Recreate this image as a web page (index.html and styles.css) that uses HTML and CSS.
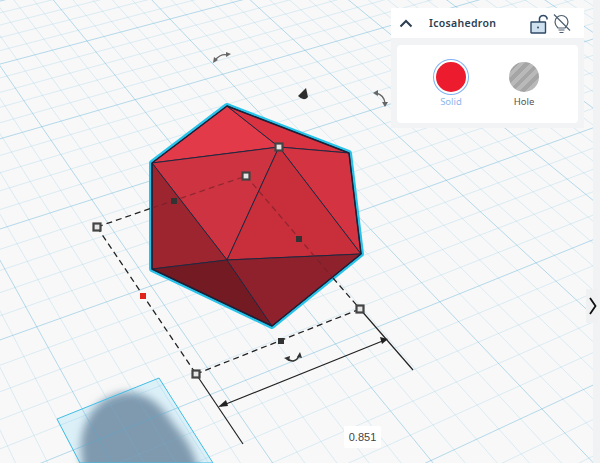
FILE: index.html
```html
<!DOCTYPE html>
<html lang="en">
<head>
    <meta charset="UTF-8">
    <title>Icosahedron</title>
    <link rel="stylesheet" href="styles.css">
</head>
<body>

<div class="editor">
    <div class="stage">
        <svg class="scene" width="593" height="463" viewBox="0 0 593 463">
            <defs>
                <filter id="soft" x="-30%" y="-30%" width="160%" height="160%"><feGaussianBlur stdDeviation="4"/></filter>
            </defs>

            <!-- shadow sits under the grid -->
            <polygon class="plate-fill" points="57,419 159,378 213,463 80,463"/>
            <path class="shadow" filter="url(#soft)" d="M81 445 C83 416 100 396 124 393 C146 391 160 404 172 422 C184 438 198 450 202 490 L84 490 Z"/>
            <g id="grid"></g>
            <polygon class="plate-line" points="213,463 159,378 57,419 80,463"/>

            <!-- extension and size lines -->
            <line class="solid-line" x1="196" y1="374" x2="243" y2="444"/>
            <line class="solid-line" x1="360" y1="309" x2="413" y2="370"/>
            <line class="solid-line" x1="221" y1="406" x2="385" y2="340"/>
            <polygon class="head" points="218,407 226,400 228,406"/>
            <polygon class="head" points="388,339 380,337 382,344"/>

            <!-- icosahedron -->
            <polygon class="halo" points="227,106 349,153 361,254 272,326 152,269 152,163"/>
            <polygon class="face f1" points="227,106 279,147 152,163"/>
            <polygon class="face f2" points="227,106 349,153 279,147"/>
            <polygon class="face f3" points="152,163 279,147 227,260"/>
            <polygon class="face f4" points="279,147 349,153 361,254"/>
            <polygon class="face f5" points="279,147 361,254 227,260"/>
            <polygon class="face f6" points="152,163 227,260 152,269"/>
            <polygon class="face f7" points="152,269 227,260 272,326"/>
            <polygon class="face f8" points="227,260 361,254 272,326"/>
            <polygon class="rim" points="227,106 349,153 361,254 272,326 152,269 152,163"/>

            <!-- bounding box -->
            <line class="dash" x1="97" y1="227" x2="152" y2="208"/>
            <line class="dash faint" x1="152" y1="208" x2="246" y2="176"/>
            <line class="dash faint" x1="246" y1="176" x2="333" y2="278"/>
            <line class="dash" x1="333" y1="278" x2="360" y2="309"/>
            <line class="dash" x1="97" y1="227" x2="196" y2="374"/>
            <line class="dash" x1="196" y1="374" x2="360" y2="309"/>

            <rect class="mid" x="171" y="198" width="6" height="6"/>
            <rect class="mid" x="296" y="236" width="6" height="6"/>
            <rect class="mid" x="278" y="338" width="6" height="6"/>
            <rect class="mid red" x="140" y="293" width="6" height="6"/>

            <rect class="handle" x="93.500" y="223.500" width="7" height="7"/>
            <rect class="handle" x="192.500" y="370.500" width="7" height="7"/>
            <rect class="handle" x="356.500" y="305.500" width="7" height="7"/>
            <rect class="handle" x="242.500" y="172.500" width="7" height="7"/>
            <rect class="handle" x="275.500" y="143.500" width="7" height="7"/>

            <!-- cone handle and rotate arrows -->
            <path class="cone" d="M306 88 L308 97 Q304 102 298 96 Z"/>
            <path class="turn" d="M215 60 Q221 53 228 55"/>
            <polygon class="turn-head" points="213,63 214,57 218,60"/>
            <polygon class="turn-head" points="231,54 226,52 226,57"/>
            <path class="turn" d="M376 93 Q384 95 385 103"/>
            <polygon class="turn-head" points="373,93 378,90 378,96"/>
            <polygon class="turn-head" points="385,107 382,102 388,102"/>
            <path class="turn dark" d="M287 359 Q295 364 299 356"/>
            <polygon class="turn-head dark" points="284,358 290,356 289,361"/>
            <polygon class="turn-head dark" points="300,352 297,357 302,358"/>
        </svg>

        <div class="size-label">0.851</div>

        <div class="panel">
            <div class="panel-head">
                <svg class="chevron" width="14" height="9" viewBox="0 0 14 9"><path d="M1.500 7.500 L7 2 L12.500 7.500"/></svg>
                <span class="panel-title">Icosahedron</span>
                <svg class="lock" width="18" height="21" viewBox="0 0 18 21">
                    <rect x="1" y="9" width="14.500" height="11" rx="0.500"/>
                    <circle cx="8" cy="14.500" r="1"/>
                    <path d="M9.500 9 V5 a4 4 0 0 1 7.500 0 v1.500"/>
                </svg>
                <svg class="bulb" width="18" height="21" viewBox="0 0 18 21">
                    <path d="M5 15 C3 13 2 11.500 2 9 A6.500 6.500 0 0 1 15 9 C15 11.500 14 13 12 15 Z"/>
                    <path d="M5.500 17 H11.500 M6.500 19.500 H10.500"/>
                    <path d="M1 1.500 L17 17.500"/>
                </svg>
            </div>
            <div class="panel-body">
                <div class="card">
                    <div class="option selected">
                        <div class="swatch red"></div>
                        <span>Solid</span>
                    </div>
                    <div class="option">
                        <div class="swatch striped"></div>
                        <span>Hole</span>
                    </div>
                </div>
            </div>
        </div>

        <div class="side-tab">
            <svg width="8" height="18" viewBox="0 0 8 18"><path d="M1 1 L6.500 9 L1 17"/></svg>
        </div>
    </div>
    <div class="side-strip"></div>
</div>

<script src="grid.js"></script>
</body>
</html>
```

FILE: styles.css
```css
body {
    margin: 0;
    font-family: "Noto Sans", sans-serif;
    background-color: #f7f8f8;
}
.editor {
    display: flex;
    width: 600px;
    height: 463px;
    overflow: hidden;
}
.stage {
    position: relative;
    flex: 1;
    background-color: #f8f8f8;
}
.scene {
    display: block;
    filter: blur(0.4px);
}
.side-strip {
    width: 7px;
    background-color: #f1f2f3;
}

/* grid */
.minor {
    stroke: rgba(110, 190, 225, 0.21);
    stroke-width: 1;
}
.major {
    stroke: rgba(85, 175, 215, 0.42);
    stroke-width: 1;
}
.plate-fill {
    fill: #dcf0f8;
}
.plate-line {
    fill: none;
    stroke: #3fbde6;
    stroke-width: 1;
}
.shadow {
    fill: #7f99ae;
}

/* shape */
.halo {
    fill: none;
    stroke: #29c3ea;
    stroke-width: 6;
    stroke-linejoin: round;
}
.face {
    stroke: #22263f;
    stroke-width: 1;
    stroke-linejoin: round;
}
.f1 { fill: #e23a49; }
.f2 { fill: #d93241; }
.f3 { fill: #cd3340; }
.f4 { fill: #d43441; }
.f5 { fill: #c92e3b; }
.f6 { fill: #9d2530; }
.f7 { fill: #741a23; }
.f8 { fill: #8e212c; }
.rim {
    fill: none;
    stroke: #1c2138;
    stroke-width: 1.5;
    stroke-linejoin: round;
}

/* handles */
.dash {
    stroke: #222;
    stroke-width: 1.3;
    stroke-dasharray: 6 4;
}
.faint {
    stroke: #6d2028;
    opacity: 0.6;
}
.solid-line {
    stroke: #222;
    stroke-width: 1.2;
}
.head {
    fill: #222;
}
.mid {
    fill: #333;
}
.mid.red {
    fill: #e1231e;
}
.handle {
    fill: #e6e6e6;
    stroke: #444;
    stroke-width: 2.2;
}
.cone {
    fill: #2e2e2e;
}
.turn {
    fill: none;
    stroke: #666;
    stroke-width: 1.3;
}
.turn.dark {
    stroke: #333;
    stroke-width: 1.5;
}
.turn-head {
    fill: #666;
}
.turn-head.dark {
    fill: #333;
}

.size-label {
    position: absolute;
    left: 344px;
    top: 426px;
    width: 37px;
    height: 22px;
    background-color: #fff;
    border-radius: 2px;
    color: #444;
    font-family: "Liberation Sans", sans-serif;
    font-size: 11px;
    line-height: 22px;
    text-align: center;
}

/* inspector */
.panel {
    position: absolute;
    top: 8px;
    left: 391px;
    width: 193px;
    background-color: #f1f3f5;
}
.panel-head {
    display: flex;
    align-items: center;
    height: 30px;
    padding-left: 8px;
    background-color: #fff;
}
.panel-title {
    margin-left: 16px;
    width: 101px;
    font-size: 10.5px;
    font-weight: 600;
    color: #2c3e50;
    letter-spacing: 0.3px;
}
.chevron path {
    fill: none;
    stroke: #2c3e50;
    stroke-width: 2;
}
.lock rect {
    fill: #cfe0ee;
    stroke: #2f4a66;
    stroke-width: 1.4;
}
.lock circle {
    fill: #2f4a66;
}
.lock path {
    fill: none;
    stroke: #2f4a66;
    stroke-width: 1.5;
}
.bulb {
    margin-left: 5px;
}
.bulb path {
    fill: none;
    stroke: #4d5f70;
    stroke-width: 1.2;
}
.panel-body {
    padding: 7px 6px 5px;
}
.card {
    display: flex;
    justify-content: center;
    gap: 33px;
    height: 61px;
    padding-top: 17px;
    background-color: #fff;
    border-radius: 4px;
}
.option {
    display: flex;
    flex-direction: column;
    align-items: center;
    width: 40px;
    gap: 4px;
    font-size: 9.5px;
    line-height: 12px;
    color: #555;
}
.option.selected {
    color: #8fb6ec;
}
.swatch {
    width: 30px;
    height: 30px;
    border-radius: 50%;
}
.swatch.red {
    background-color: #ec1c2e;
    box-shadow: 0 0 0 2px #fff, 0 0 0 3px #7fb2f0;
}
.swatch.striped {
    background: repeating-linear-gradient(135deg, #b9b9b9 0, #b9b9b9 4px, #a5a5a5 4px, #a5a5a5 8px);
}
.side-tab {
    position: absolute;
    top: 289px;
    left: 586px;
    display: flex;
    align-items: center;
    justify-content: center;
    box-sizing: border-box;
    width: 12px;
    height: 34px;
    padding-left: 2px;
    background-color: #eff1f2;
    z-index: 1;
}
.side-tab path {
    fill: none;
    stroke: #111;
    stroke-width: 1.8;
}
```

FILE: grid.js
```js
// workplane grid: perspective map from grid cells to screen pixels
const svgNS = "http://www.w3.org/2000/svg";
const grid = document.getElementById("grid");

function project(u, v) {
    const w = 1 + 0.02956 * u - 0.07 * v;
    return [
        (87 + 88.03 * u + 38.64 * v) / w,
        (41 - 21.43 * u + 51.66 * v) / w
    ];
}

function addLine(a, b, cls) {
    const line = document.createElementNS(svgNS, "line");
    line.setAttribute("x1", a[0]);
    line.setAttribute("y1", a[1]);
    line.setAttribute("x2", b[0]);
    line.setAttribute("y2", b[1]);
    line.setAttribute("class", cls);
    grid.appendChild(line);
}

// minor lines first so the major ones stay on top
[false, true].forEach(function(drawMajor) {
    for (let i = -50; i <= 70; i++) {
        const isMajor = i % 5 === 0;
        if (isMajor !== drawMajor) continue;
        const cls = isMajor ? "major" : "minor";
        addLine(project(i / 5, -8), project(i / 5, 7), cls);
    }
    for (let i = -40; i <= 35; i++) {
        const isMajor = i % 5 === 0;
        if (isMajor !== drawMajor) continue;
        const cls = isMajor ? "major" : "minor";
        addLine(project(-8, i / 5), project(14, i / 5), cls);
    }
});
```
